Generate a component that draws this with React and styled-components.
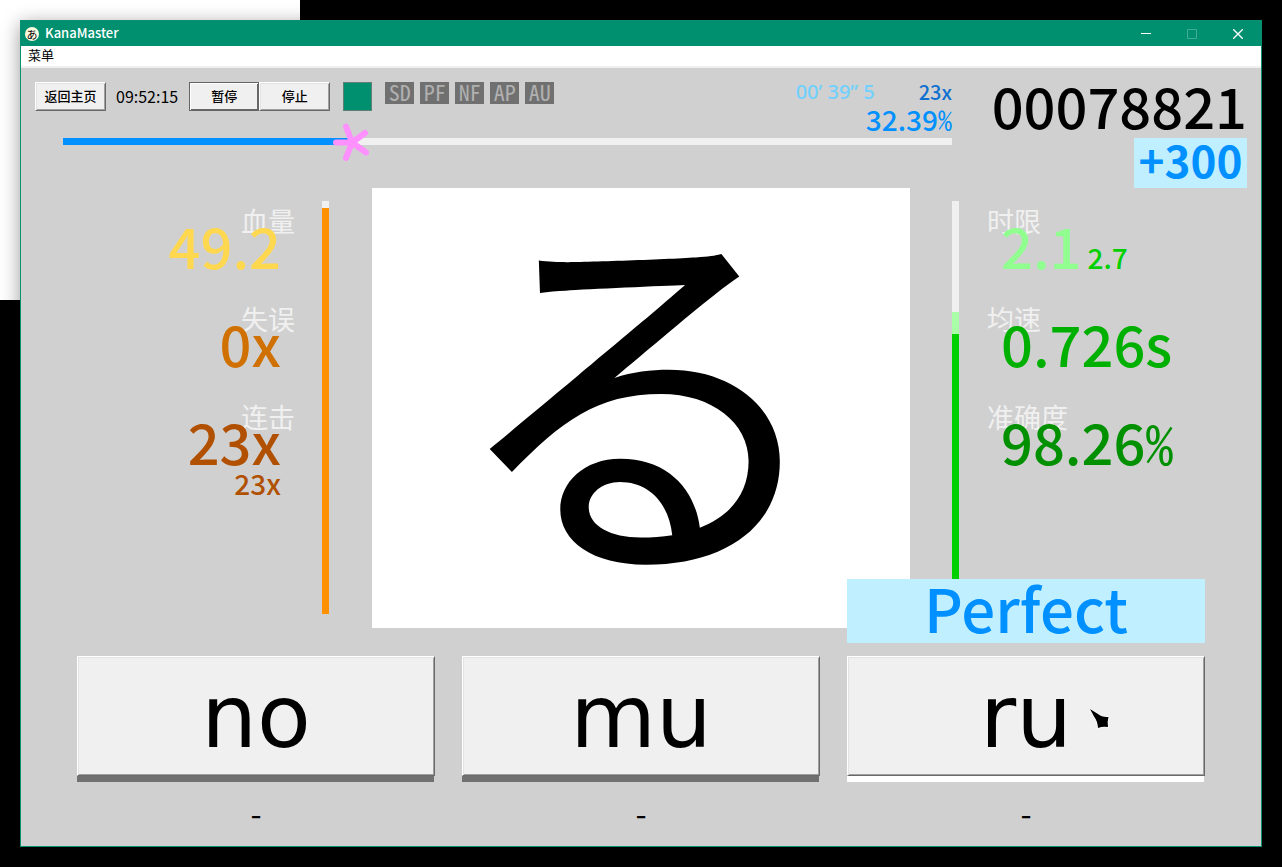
import React from "react";
import styled, { createGlobalStyle, css } from "styled-components";

const SANS = '"Noto Sans CJK SC", sans-serif';
const NARROW = '"Noto Sans Mono CJK SC", "Noto Sans CJK SC", sans-serif';

const GlobalStyle = createGlobalStyle`
  *, *::before, *::after { box-sizing: border-box; }
  body {
    margin: 0;
    background: linear-gradient(#fff, #fff) 0 0 / 300px 300px no-repeat #000;
    font-family: ${SANS};
    color: #000;
  }
  button { font-family: inherit; color: inherit; padding: 0; border: 0; }
`;

const Desktop = styled.div`
  display: flex;
  min-height: 100vh;
  padding: 20px;
`;

const Window = styled.div`
  flex: 1;
  min-width: 0;
  display: flex;
  flex-direction: column;
  border: 1px solid #089070;
  background: #d0d0d0;
  box-shadow: 0 4px 18px rgba(0, 0, 0, 0.4);
`;

const TitleBar = styled.header`
  display: flex;
  align-items: center;
  height: 25px;
  background: #009070;
  color: #fff;
`;

const AppIcon = styled.span`
  display: grid;
  place-items: center;
  width: 14px;
  height: 14px;
  margin: 0 6px 0 4px;
  border-radius: 50%;
  background: #fffbe0;
  color: #000;
  font-size: 11px;
  line-height: 14px;
`;

const Title = styled.h1`
  flex: 1;
  margin: 0;
  padding-bottom: 2px;
  font-size: 13px;
  line-height: 22px;
  font-weight: 500;
`;

const WindowButton = styled.button`
  display: grid;
  place-items: center;
  width: 46px;
  height: 25px;
  background: none;
  opacity: ${(p) => (p.disabled ? 0.25 : 1)};
  svg { display: block; fill: none; stroke: #fff; }
`;

const MenuBar = styled.nav`
  display: flex;
  height: 22px;
  padding-left: 7px;
  background: #fff;
  border-bottom: 2px solid #f0f0f0;
`;

const MenuItem = styled.button`
  height: 18px;
  background: none;
  font-size: 13px;
  line-height: 18px;
`;

const Head = styled.section`
  display: grid;
  grid-template-columns: minmax(0, 1fr) 309px;
  padding-top: 14px;
`;

const Toolbar = styled.div`
  display: flex;
  align-items: flex-start;
  height: 56px;
  padding-left: 14px;
`;

const bevel = css`
  background: #f0f0f0;
  border: 1px solid;
  border-color: #fff #696969 #696969 #fff;
  box-shadow: inset 1px 1px #e3e3e3, inset -1px -1px #a0a0a0;
`;

const ToolButton = styled.button`
  ${bevel}
  width: 71px;
  height: 29px;
  padding-bottom: 2px;
  font-size: 13px;
  line-height: 24px;
  font-weight: 500;
  ${(p) => p.$focused && css`
    width: 70px;
    border-color: #646464;
    box-shadow: inset 1px 1px #fff, inset -1px -1px #696969;
  `}
`;

const Clock = styled.time`
  margin: 0 11px 0 10px;
  font-size: 16px;
  line-height: 29px;
`;

const Swatch = styled.span`
  width: 29px;
  height: 29px;
  margin: 0 13px;
  background: #009070;
  border: 1px solid #5f7f77;
`;

const Tags = styled.ul`
  display: flex;
  gap: 6px;
  margin: 0;
  padding: 0;
  list-style: none;
`;

const Tag = styled.li`
  width: 29px;
  height: 22px;
  background: #707070;
  color: #b0b0b0;
  font-family: ${NARROW};
  font-size: 22px;
  line-height: 18px;
  text-align: center;
`;

const Summary = styled.div`
  margin-left: auto;
  text-align: right;
`;

const SummaryRow = styled.div`
  display: flex;
  justify-content: flex-end;
  gap: 44px;
  font-size: 20px;
  line-height: 20px;
  font-weight: 500;
  color: #1070d0;
`;

const Elapsed = styled.span`
  font-family: "Noto Sans", sans-serif;
  color: #70d0ff;
`;

const Completion = styled.div`
  font-size: 28px;
  line-height: 34px;
  font-weight: 500;
  color: #0090ff;
`;

const Percent = styled.span`
  font-family: ${NARROW};
  font-weight: 400;
`;

const Track = styled.div`
  display: flex;
  align-items: center;
  height: 7px;
  margin-left: 42px;
  background: #f0f0f0;
`;

const TrackFill = styled.div`
  height: 7px;
  background: #0090ff;
`;

const Spark = styled.svg`
  flex: none;
  width: 36px;
  height: 38px;
  margin-left: -18px;
`;

const ScoreColumn = styled.div`
  display: flex;
  flex-direction: column;
  align-items: flex-end;
  padding-right: 14px;
`;

const Score = styled.output`
  padding-bottom: 10px;
  font-size: 56px;
  line-height: 46px;
  font-weight: 500;
`;

const Bonus = styled.div`
  width: 113px;
  padding-bottom: 8px;
  background: #c0f0ff;
  color: #0090ff;
  font-size: 44px;
  line-height: 42px;
  font-weight: 700;
  text-align: center;
`;

const Board = styled.section`
  display: grid;
  grid-template-columns: 301fr 7px 623fr 7px 302fr;
`;

const Stats = styled.dl`
  display: flex;
  flex-direction: column;
  gap: 30px;
  margin: 0;
  padding: 18px 27px 0 28px;
  text-align: ${(p) => p.$align};
`;

const Stat = styled.div`
  height: 68px;
`;

const StatLabel = styled.dt`
  font-size: 27px;
  line-height: 30px;
  color: #f0f0f0;
`;

const StatValue = styled.dd`
  position: relative;
  margin: -22px 14px 0;
  font-size: 56px;
  line-height: 62px;
  font-weight: 500;
  white-space: nowrap;
  color: ${(p) => p.$color};
`;

const StatNote = styled.span`
  display: ${(p) => (p.$below ? "block" : "inline")};
  margin-top: -4px;
  margin-left: ${(p) => (p.$below ? 0 : 6)}px;
  font-size: 28px;
  line-height: 30px;
  font-weight: 500;
  color: ${(p) => p.$color};
`;

const Gauge = styled.div`
  display: flex;
  flex-direction: column;
  margin: 13px 0 14px;
  background: #f0f0f0;
`;

const GaugePart = styled.div`
  background: ${(p) => p.$color};
`;

const Card = styled.div`
  height: 440px;
  margin: 0 42px 0 43px;
  background: #fff;
  font-family: "Noto Sans CJK JP", sans-serif;
  font-size: 390px;
  line-height: 380px;
  font-weight: 400;
  text-align: center;
`;

const Answers = styled.section`
  display: grid;
  grid-template-columns: repeat(3, minmax(0, 1fr));
  gap: 27px;
  padding: 28px 56px 0;
`;

const Answer = styled.div`
  position: relative;
  text-align: center;
`;

const AnswerButton = styled.button`
  ${bevel}
  display: block;
  width: 100%;
  height: 120px;
  padding-top: 2px;
  font-family: "DejaVu Sans", sans-serif;
  font-size: 88px;
  line-height: 116px;
`;

const Underline = styled.div`
  height: 6px;
  margin-right: 1px;
  background: ${(p) => (p.$active ? "#fff" : "#707070")};
`;

const AnswerNote = styled.p`
  margin: 14px 0 0;
  font-size: 32px;
  line-height: 32px;
`;

const Verdict = styled.div`
  position: absolute;
  left: 0;
  right: 0;
  top: -77px;
  padding-bottom: 8px;
  background: #c0f0ff;
  color: #0090ff;
  font-size: 60px;
  line-height: 56px;
  font-weight: 500;
`;

const Cursor = styled.svg`
  position: absolute;
  left: 68%;
  top: 52px;
  width: 20px;
  height: 22px;
  pointer-events: none;
`;

const TAGS = ["SD", "PF", "NF", "AP", "AU"];
const ANSWERS = ["no", "mu", "ru"];

export default function App() {
  return (
    <Desktop>
      <GlobalStyle />
      <Window>
        <TitleBar>
          <AppIcon lang="ja">あ</AppIcon>
          <Title>KanaMaster</Title>
          <WindowButton aria-label="Minimize">
            <svg width="10" height="10"><path d="M0 4.5H10" /></svg>
          </WindowButton>
          <WindowButton aria-label="Maximize" disabled>
            <svg width="10" height="10"><path d="M.5 .5H9.5V9.5H.5Z" /></svg>
          </WindowButton>
          <WindowButton aria-label="Close">
            <svg width="10" height="10"><path d="M0 0L10 10M10 0L0 10" strokeWidth="1.3" /></svg>
          </WindowButton>
        </TitleBar>
        <MenuBar><MenuItem>菜单</MenuItem></MenuBar>

        <Head>
          <div>
            <Toolbar>
              <ToolButton>返回主页</ToolButton>
              <Clock>09:52:15</Clock>
              <ToolButton $focused>暂停</ToolButton>
              <ToolButton>停止</ToolButton>
              <Swatch />
              <Tags>{TAGS.map((t) => <Tag key={t}>{t}</Tag>)}</Tags>
              <Summary>
                <SummaryRow>
                  <Elapsed>00’ 39” 5</Elapsed>
                  <span>23x</span>
                </SummaryRow>
                <Completion>32.39<Percent>%</Percent></Completion>
              </Summary>
            </Toolbar>
            <Track>
              <TrackFill style={{ width: "32.39%" }} />
              <Spark viewBox="0 0 36 38" fill="none" stroke="#ff90ff" strokeWidth="6" strokeLinecap="round">
                <path d="M19 19.500H3M19 19.500L13 3.500M19 19.500L32 10M19 19.500L33 29.500M19 19.500L13 35" />
              </Spark>
            </Track>
          </div>
          <ScoreColumn>
            <Score>00078821</Score>
            <Bonus>+300</Bonus>
          </ScoreColumn>
        </Head>

        <Board>
          <Stats $align="right">
            <Stat>
              <StatLabel>血量</StatLabel>
              <StatValue $color="#ffd850">49.2</StatValue>
            </Stat>
            <Stat>
              <StatLabel>失误</StatLabel>
              <StatValue $color="#d07000">0x</StatValue>
            </Stat>
            <Stat>
              <StatLabel>连击</StatLabel>
              <StatValue $color="#b05000">
                23x
                <StatNote $below $color="#b05000">23x</StatNote>
              </StatValue>
            </Stat>
          </Stats>
          <Gauge>
            <GaugePart style={{ height: "1.7%" }} />
            <GaugePart $color="#ff9000" style={{ flex: 1 }} />
          </Gauge>
          <Card lang="ja">る</Card>
          <Gauge>
            <GaugePart style={{ height: "26.9%" }} />
            <GaugePart $color="#a8ffa8" style={{ height: "5.3%" }} />
            <GaugePart $color="#00d000" style={{ flex: 1 }} />
          </Gauge>
          <Stats $align="left">
            <Stat>
              <StatLabel>时限</StatLabel>
              <StatValue $color="#90ff90">
                2.1
                <StatNote $color="#00d000">2.7</StatNote>
              </StatValue>
            </Stat>
            <Stat>
              <StatLabel>均速</StatLabel>
              <StatValue $color="#00b000">0.726s</StatValue>
            </Stat>
            <Stat>
              <StatLabel>准确度</StatLabel>
              <StatValue $color="#009000">98.26<Percent>%</Percent></StatValue>
            </Stat>
          </Stats>
        </Board>

        <Answers>
          {ANSWERS.map((a) => (
            <Answer key={a}>
              {a === "ru" && <Verdict>Perfect</Verdict>}
              <AnswerButton>{a}</AnswerButton>
              <Underline $active={a === "ru"} />
              <AnswerNote>-</AnswerNote>
              {a === "ru" && (
                <Cursor viewBox="0 0 20 22">
                  <path
                    d="M0 1L8 6Q12 9.500 18.500 9Q17 14 18 19Q13 18 8 20Q7.500 13 4 8.500Z"
                    fill="#000" stroke="#fff" strokeWidth="1.4" paintOrder="stroke"
                  />
                </Cursor>
              )}
            </Answer>
          ))}
        </Answers>
      </Window>
    </Desktop>
  );
}
